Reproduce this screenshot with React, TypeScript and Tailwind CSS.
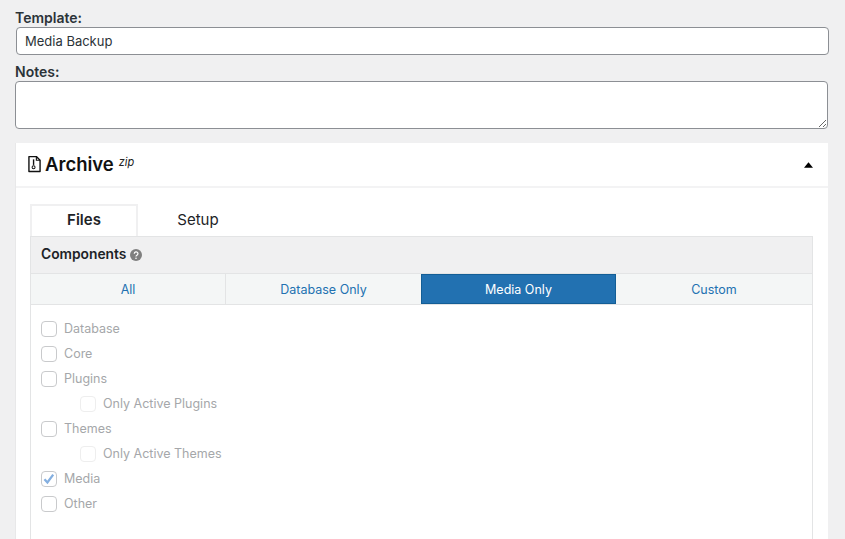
import React from "react";

const font = { fontFamily: "Inter, 'Liberation Sans', sans-serif" };

const Check = ({ label, sub, checked }: { label: string; sub?: boolean; checked?: boolean }) => (
  <div className={`flex items-center h-[25px] ${sub ? "pl-[49px]" : "pl-[10px]"}`}>
    <span
      className={`flex items-center justify-center w-4 h-4 mb-[1px] rounded-[4px] border bg-white ${
        sub ? "border-[#eeeeee]" : "border-[#c9cacc]"
      }`}
    >
      {checked && (
        <svg viewBox="0 0 16 16" className="w-[14px] h-[14px]">
          <path d="M2.8 8.2l3.4 3.8L12.8 3" fill="none" stroke="#84afe0" strokeWidth="2.6" />
        </svg>
      )}
    </span>
    <span className="ml-[7px] text-[12.5px] leading-none text-[#a5a7aa]">{label}</span>
  </div>
);

const Seg = ({ label, className }: { label: string; className: string }) => (
  <div className={`flex items-center justify-center pt-[2px] text-[12.5px] ${className}`}>{label}</div>
);

export default function App() {
  return (
    <div className="w-[845px] h-[539px] overflow-hidden bg-[#f0f0f1] text-[#1d2327]" style={font}>
      <div className="pl-[15px] w-[829px] pt-[10px]">
        <label className="block text-[14px] font-semibold leading-[16px] text-[#2c3338]">Template:</label>
        <input
          readOnly
          value="Media Backup"
          className="block ml-px w-[813px] h-[28px] mt-[1px] px-2 text-[13px] text-[#2c3338] bg-white border border-[#8c8f94] rounded-[4px] outline-none"
        />
        <label className="block mt-[9px] text-[14px] font-semibold leading-[16px] text-[#2c3338]">Notes:</label>
        <textarea
          readOnly
          className="block w-[813px] h-[48px] mt-[1px] bg-white border border-[#8c8f94] rounded-[4px] outline-none"
        />

        <section className="mt-[14px] w-[813px] h-[420px] bg-white border-l border-[#e8e8e9]">
          <div className="flex items-center h-[45px] border-b-2 border-[#f3f3f4] pl-[12px] pr-[15px]">
            <svg viewBox="0 0 14 18" className="w-[13px] h-[18px] -mt-px">
              <path d="M1 1h8l4 4v12H1z" fill="none" stroke="#111" strokeWidth="1.5" strokeLinejoin="round" />
              <path d="M9 1v4h4" fill="none" stroke="#111" strokeWidth="1.2" />
              <path d="M6 4v6" stroke="#111" strokeWidth="1.5" />
              <circle cx="6" cy="12.5" r="1.6" fill="none" stroke="#111" strokeWidth="1.1" />
            </svg>
            <span className="ml-[4px] text-[18.5px] font-semibold leading-none text-[#111]">Archive</span>
            <span className="ml-[5px] mb-[5px] text-[11px] italic leading-none text-[#222]">zip</span>
            <svg viewBox="0 0 10 6" className="ml-auto w-[9px] h-[6px]">
              <path d="M5 0l5 6H0z" fill="#000" />
            </svg>
          </div>

          <div className="pl-[14px] pt-[16px] w-[797px]">
            <div className="flex h-[32px] text-[15px]">
              <div className="w-[108px] flex items-center justify-center pb-[2px] font-semibold text-[#1d2327] border-2 border-b-0 border-[#f0f0f1] bg-white">
                Files
              </div>
              <div className="w-[120px] flex items-center justify-center text-[#1d2327]">Setup</div>
            </div>
            <div className="border-x border-[#e3e4e5] h-[310px]">
              <div className="flex items-center h-[38px] pb-[1px] bg-[#f0f0f1] border-y border-[#e3e4e5] pl-[10px] text-[13.8px] font-semibold text-[#1d2327]">
                Components
                <svg viewBox="0 0 12 12" className="ml-[4px] w-3 h-3">
                  <circle cx="6" cy="6" r="6" fill="#7f7f7f" />
                  <path d="M4.3 4.7a1.8 1.8 0 1 1 2.6 1.5c-.6.3-.9.6-.9 1.2" fill="none" stroke="#fff" strokeWidth="1.2" />
                  <circle cx="6" cy="9.2" r=".8" fill="#fff" />
                </svg>
              </div>
              <div className="flex h-[31px] bg-[#f4f6f6] border-b border-[#e3e4e5]">
                <Seg label="All" className="w-[195px] text-[#2271b1] border-r border-[#e3e4e5]" />
                <Seg label="Database Only" className="w-[195px] text-[#2271b1]" />
                <Seg label="Media Only" className="w-[195px] bg-[#2271b1] text-white border border-[#135e96]" />
                <Seg label="Custom" className="flex-1 text-[#2271b1]" />
              </div>
              <div className="pt-[12px]">
                <Check label="Database" />
                <Check label="Core" />
                <Check label="Plugins" />
                <Check label="Only Active Plugins" sub />
                <Check label="Themes" />
                <Check label="Only Active Themes" sub />
                <Check label="Media" checked />
                <Check label="Other" />
              </div>
            </div>
          </div>
        </section>
      </div>
    </div>
  );
}
